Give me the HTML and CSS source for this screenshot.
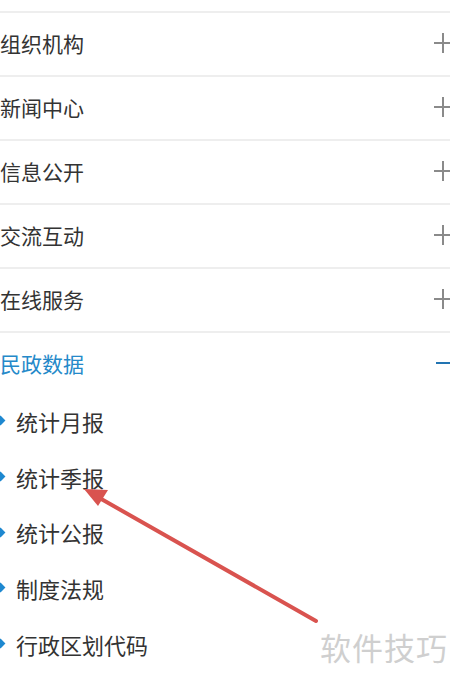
FILE: index.html
```html
<!DOCTYPE html>
<html lang="zh-CN">
<head>
  <meta charset="UTF-8" />
  <meta name="viewport" content="width=device-width, initial-scale=1.0"/>
  <title>民政数据</title>
  <link rel="stylesheet" href="styles.css">
</head>
<body>
  <ul class="menu">
    <li class="item"><span>组织机构</span><span class="plus"></span></li>
    <li class="item"><span>新闻中心</span><span class="plus"></span></li>
    <li class="item"><span>信息公开</span><span class="plus"></span></li>
    <li class="item"><span>交流互动</span><span class="plus"></span></li>
    <li class="item"><span>在线服务</span><span class="plus"></span></li>
    <li class="item open"><span>民政数据</span><span class="minus"></span></li>
  </ul>

  <ul class="sub">
    <li>统计月报</li>
    <li>统计季报</li>
    <li>统计公报</li>
    <li>制度法规</li>
    <li>行政区划代码</li>
  </ul>

  <svg class="arrow" width="450" height="684" viewBox="0 0 450 684">
    <line x1="316" y1="621" x2="96" y2="496" stroke="#d9534f" stroke-width="4" stroke-linecap="round"/>
    <polygon points="84,489 108,490 98,506" fill="#d9534f"/>
  </svg>

  <div class="mark">软件技巧</div>
</body>
</html>
```

FILE: styles.css
```css
body {
  margin: 0;
  width: 450px;
  height: 684px;
  overflow: hidden;
  position: relative;
  background: #fff;
  font-family: "Noto Sans CJK SC", "Noto Sans", sans-serif;
  color: #333333;
}
ul {
  list-style: none;
  margin: 0;
  padding: 0;
}
.menu {
  margin-top: 11px;
  border-top: 2px solid #eeeeee;
}
.item {
  box-sizing: border-box;
  height: 64px;
  padding-bottom: 3px;
  display: flex;
  align-items: center;
  justify-content: space-between;
  font-size: 21px;
  border-bottom: 2px solid #eeeeee;
}
.item.open {
  height: 62px;
  color: #2489c9;
  border-bottom: none;
}
.plus {
  position: relative;
  width: 19px;
  height: 20px;
  margin-right: -3px;
}
.plus::before,
.plus::after {
  content: "";
  position: absolute;
  background: #8a8a8a;
}
.plus::before {
  left: 0;
  right: 0;
  top: 9px;
  height: 2px;
}
.plus::after {
  top: 0;
  bottom: 0;
  left: 8px;
  width: 2px;
}
.minus {
  width: 16px;
  height: 2px;
  margin-right: -2px;
  background: #2274b2;
}
.sub {
  margin-top: -2px;
}
.sub li {
  height: 55.75px;
  display: flex;
  align-items: center;
  font-size: 22px;
  padding-left: 16px;
  position: relative;
}
.sub li::before {
  content: "";
  position: absolute;
  left: -3px;
  top: 24px;
  width: 7px;
  height: 7px;
  background: #1e88d0;
  transform: rotate(45deg);
}
.arrow {
  position: absolute;
  left: 0;
  top: 0;
  pointer-events: none;
}
.mark {
  position: absolute;
  left: 320px;
  top: 624px;
  font-size: 31px;
  color: #cfcfcf;
  letter-spacing: 1px;
}
```
